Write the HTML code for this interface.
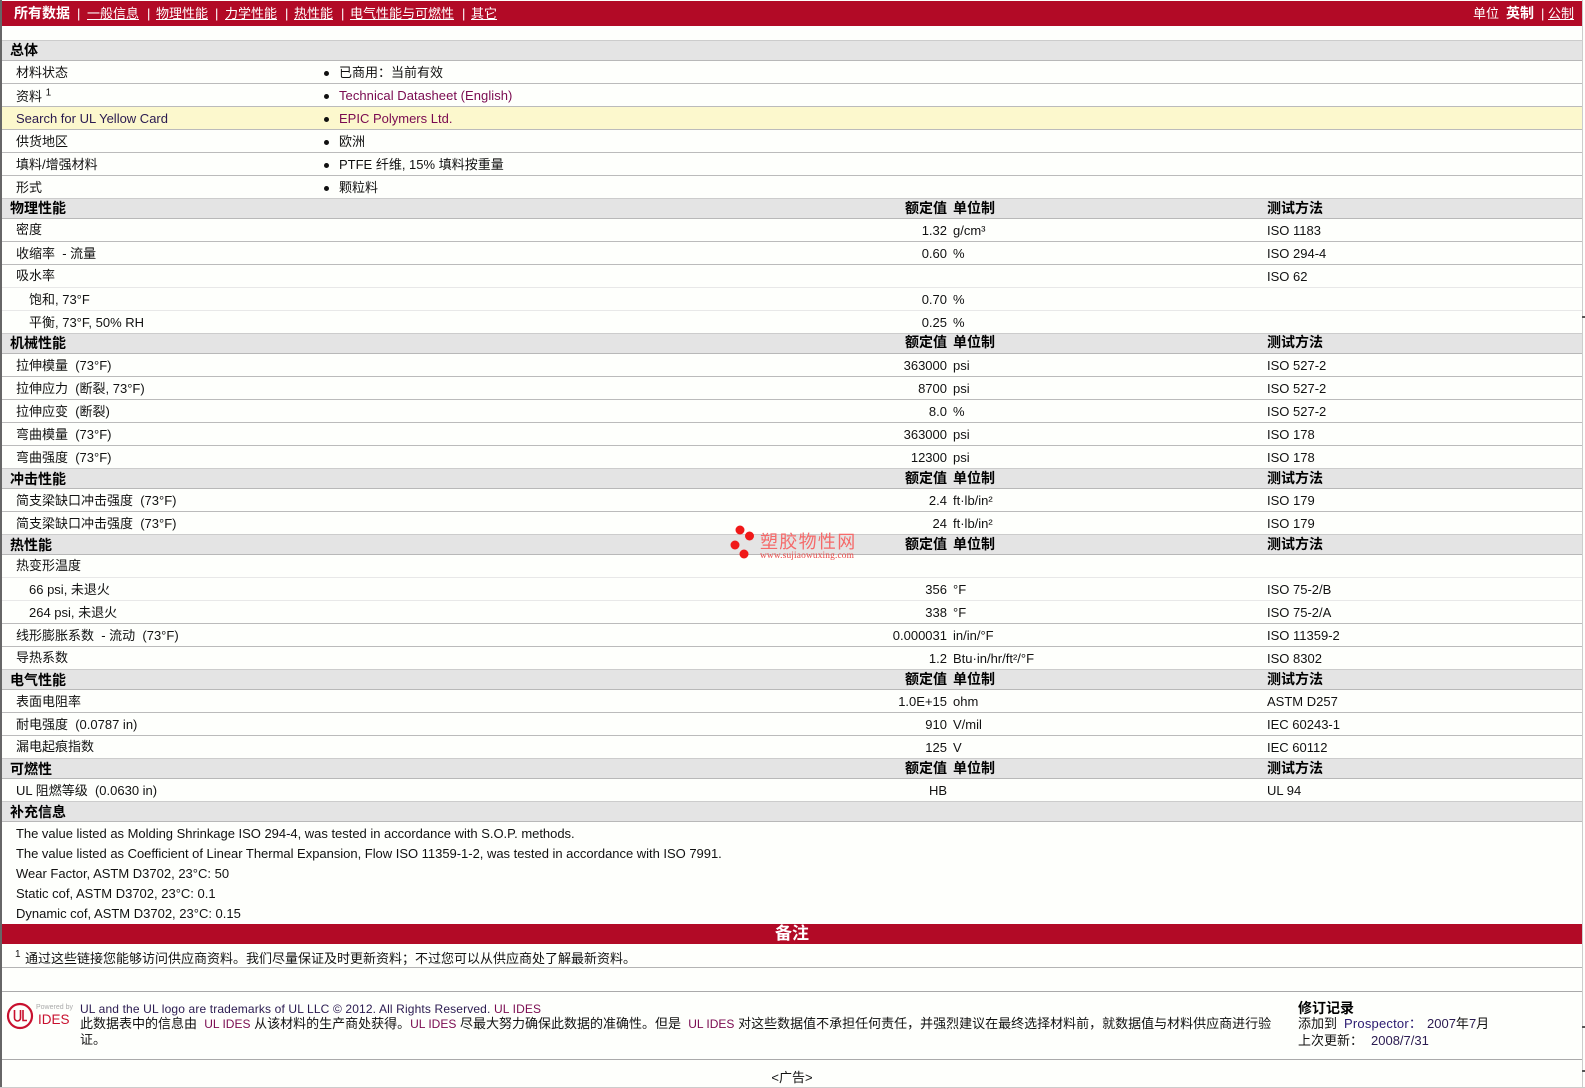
<!DOCTYPE html>
<html lang="zh">
<head>
<meta charset="utf-8">
<title>数据表</title>
<style>
html,body{margin:0;padding:0;background:#fefffc;}
body{position:relative;width:1585px;height:1088px;overflow:hidden;font-family:"Liberation Sans","WenQuanYi Zen Hei","Noto Sans CJK SC",sans-serif;font-size:13px;color:#111;}
a{color:inherit;text-decoration:none}
.abs,.r,.h,.l,.v,.u,.m,.b,.t,.x{position:absolute;white-space:nowrap}
.r{left:2px;width:1580px;height:22px;line-height:22px;border-bottom:1px solid #bbb;}
.r.n{border-bottom-color:#e8e8e8}
.r .l,.r .v,.r .u,.r .m,.r .t{top:1px}
.r .l.k{top:0}
.r .l.k2{top:2px}
.h{left:2px;width:1580px;height:19px;line-height:19px;background:#e4e4e4;border-bottom:1px solid #b8b8b8;border-top:1px solid #ccc;font-weight:bold;font-size:14px;color:#000;margin-top:-1px}
.l{left:14px}
.l.i{left:27px}
.h .l{left:8px;top:0}
.h .l.dn{top:1px}
.h .v,.h .u,.h .m{top:0}
.h .up{top:-1px !important}
.v{right:635px;text-align:right}
.u{left:951px}
.m{left:1265px}
.b{left:322px;width:5px;height:5px;border-radius:50%;background:#111;top:10px}
.t{left:337px}
.p{color:#7a0a50}
.f{font-size:12px}
.nav{color:#fff;line-height:25px;top:1px}
.nav a{text-decoration:underline}
.s{position:absolute;left:14px;height:20px;line-height:20px;white-space:nowrap}
.ln{position:absolute;left:2px;width:1580px;height:1px;background:#b4b4b4}
</style>
</head>
<body>
<div class="abs" style="left:0;top:0;width:2px;height:1088px;background:#666"></div>
<div class="abs" style="left:1582px;top:0;width:1px;height:1088px;background:#ccc"></div>
<div class="abs" style="left:1582px;top:316px;width:3px;height:2px;background:#555"></div>
<div class="abs" style="left:1582px;top:1026px;width:3px;height:2px;background:#555"></div>
<div class="abs" style="left:1582px;top:1070px;width:3px;height:2px;background:#555"></div>
<div class="abs" style="left:0;top:1087px;width:1585px;height:1px;background:#ccc"></div>

<!-- nav -->
<div class="abs" style="left:2px;top:1px;width:1580px;height:25px;background:#b20a26"></div>
<div class="abs nav" style="left:14px;font-weight:bold;font-size:14px">所有数据</div>
<div class="abs nav" style="left:77px">|</div>
<div class="abs nav" style="left:87px"><a>一般信息</a></div>
<div class="abs nav" style="left:147px">|</div>
<div class="abs nav" style="left:156px"><a>物理性能</a></div>
<div class="abs nav" style="left:215px">|</div>
<div class="abs nav" style="left:225px"><a>力学性能</a></div>
<div class="abs nav" style="left:285px">|</div>
<div class="abs nav" style="left:294px"><a>热性能</a></div>
<div class="abs nav" style="left:341px">|</div>
<div class="abs nav" style="left:350px"><a>电气性能与可燃性</a></div>
<div class="abs nav" style="left:462px">|</div>
<div class="abs nav" style="left:471px"><a>其它</a></div>
<div class="abs nav" style="left:1473px">单位</div>
<div class="abs nav" style="left:1506px;font-weight:bold;font-size:14px">英制</div>
<div class="abs nav" style="left:1541px">|</div>
<div class="abs nav" style="left:1548px"><a>公制</a></div>

<!-- general -->
<div class="h" style="top:41px"><span class="l">总体</span></div>
<div class="r" style="top:61px"><span class="l">材料状态</span><i class="b"></i><span class="t">已商用：当前有效</span></div>
<div class="r" style="top:84px"><span class="l k2">资料 <sup style="font-size:10px;line-height:0">1</sup></span><i class="b"></i><span class="t p" style="letter-spacing:.05px">Technical Datasheet (English)</span></div>
<div class="r" style="top:107px;background:#fcf8cd"><span class="l p" style="color:#2a1a50">Search for UL Yellow Card</span><i class="b"></i><span class="t p">EPIC Polymers Ltd.</span></div>
<div class="r" style="top:130px"><span class="l">供货地区</span><i class="b"></i><span class="t">欧洲</span></div>
<div class="r" style="top:153px"><span class="l">填料/增强材料</span><i class="b"></i><span class="t">PTFE 纤维, 15% 填料按重量</span></div>
<div class="r" style="top:176px"><span class="l">形式</span><i class="b"></i><span class="t">颗粒料</span></div>

<!-- physical -->
<div class="h" style="top:199px"><span class="l">物理性能</span><span class="v">额定值</span><span class="u">单位制</span><span class="m">测试方法</span></div>
<div class="r" style="top:219px"><span class="l k">密度</span><span class="v">1.32</span><span class="u">g/cm³</span><span class="m">ISO 1183</span></div>
<div class="r" style="top:242px"><span class="l">收缩率&nbsp; - 流量</span><span class="v">0.60</span><span class="u">%</span><span class="m">ISO 294-4</span></div>
<div class="r n" style="top:265px"><span class="l k">吸水率</span><span class="m">ISO 62</span></div>
<div class="r n" style="top:288px"><span class="l i">饱和, 73°F</span><span class="v">0.70</span><span class="u">%</span></div>
<div class="r" style="top:311px"><span class="l i">平衡, 73°F, 50% RH</span><span class="v">0.25</span><span class="u">%</span></div>

<!-- mechanical -->
<div class="h" style="top:334px"><span class="l">机械性能</span><span class="v up">额定值</span><span class="u up">单位制</span><span class="m up">测试方法</span></div>
<div class="r" style="top:354px"><span class="l">拉伸模量&nbsp; (73°F)</span><span class="v">363000</span><span class="u">psi</span><span class="m">ISO 527-2</span></div>
<div class="r" style="top:377px"><span class="l">拉伸应力&nbsp; (断裂, 73°F)</span><span class="v">8700</span><span class="u">psi</span><span class="m">ISO 527-2</span></div>
<div class="r" style="top:400px"><span class="l">拉伸应变&nbsp; (断裂)</span><span class="v">8.0</span><span class="u">%</span><span class="m">ISO 527-2</span></div>
<div class="r" style="top:423px"><span class="l">弯曲模量&nbsp; (73°F)</span><span class="v">363000</span><span class="u">psi</span><span class="m">ISO 178</span></div>
<div class="r" style="top:446px"><span class="l">弯曲强度&nbsp; (73°F)</span><span class="v">12300</span><span class="u">psi</span><span class="m">ISO 178</span></div>

<!-- impact -->
<div class="h" style="top:469px"><span class="l dn">冲击性能</span><span class="v">额定值</span><span class="u">单位制</span><span class="m">测试方法</span></div>
<div class="r" style="top:489px"><span class="l">简支梁缺口冲击强度&nbsp; (73°F)</span><span class="v">2.4</span><span class="u">ft·lb/in²</span><span class="m">ISO 179</span></div>
<div class="r" style="top:512px"><span class="l">简支梁缺口冲击强度&nbsp; (73°F)</span><span class="v">24</span><span class="u">ft·lb/in²</span><span class="m">ISO 179</span></div>

<!-- thermal -->
<div class="h" style="top:535px"><span class="l dn">热性能</span><span class="v">额定值</span><span class="u">单位制</span><span class="m">测试方法</span></div>
<div class="r n" style="top:555px"><span class="l k">热变形温度</span></div>
<div class="r n" style="top:578px"><span class="l i">66 psi, 未退火</span><span class="v">356</span><span class="u">°F</span><span class="m">ISO 75-2/B</span></div>
<div class="r" style="top:601px"><span class="l i">264 psi, 未退火</span><span class="v">338</span><span class="u">°F</span><span class="m">ISO 75-2/A</span></div>
<div class="r" style="top:624px"><span class="l">线形膨胀系数&nbsp; - 流动&nbsp; (73°F)</span><span class="v">0.000031</span><span class="u">in/in/°F</span><span class="m">ISO 11359-2</span></div>
<div class="r" style="top:647px"><span class="l k">导热系数</span><span class="v">1.2</span><span class="u">Btu·in/hr/ft²/°F</span><span class="m">ISO 8302</span></div>

<!-- electrical -->
<div class="h" style="top:670px"><span class="l dn">电气性能</span><span class="v">额定值</span><span class="u">单位制</span><span class="m">测试方法</span></div>
<div class="r" style="top:690px"><span class="l">表面电阻率</span><span class="v">1.0E+15</span><span class="u">ohm</span><span class="m">ASTM D257</span></div>
<div class="r" style="top:713px"><span class="l">耐电强度&nbsp; (0.0787 in)</span><span class="v">910</span><span class="u">V/mil</span><span class="m">IEC 60243-1</span></div>
<div class="r" style="top:736px"><span class="l k">漏电起痕指数</span><span class="v">125</span><span class="u">V</span><span class="m">IEC 60112</span></div>

<!-- flammability -->
<div class="h" style="top:759px"><span class="l dn">可燃性</span><span class="v">额定值</span><span class="u">单位制</span><span class="m">测试方法</span></div>
<div class="r" style="top:779px"><span class="l">UL 阻燃等级&nbsp; (0.0630 in)</span><span class="v">HB</span><span class="m">UL 94</span></div>

<!-- supplemental -->
<div class="h" style="top:802px"><span class="l dn">补充信息</span></div>
<div class="s" style="left:16px;top:824px;letter-spacing:-.02px">The value listed as Molding Shrinkage ISO 294-4, was tested in accordance with S.O.P. methods.</div>
<div class="s" style="left:16px;top:844px;letter-spacing:-.02px">The value listed as Coefficient of Linear Thermal Expansion, Flow ISO 11359-1-2, was tested in accordance with ISO 7991.</div>
<div class="s" style="left:16px;top:864px">Wear Factor, ASTM D3702, 23°C: 50</div>
<div class="s" style="left:16px;top:884px">Static cof, ASTM D3702, 23°C: 0.1</div>
<div class="s" style="left:16px;top:904px">Dynamic cof, ASTM D3702, 23°C: 0.15</div>

<!-- notes -->
<div class="abs" style="left:2px;top:924px;width:1580px;height:20px;line-height:20px;background:#b20a26;color:#fff;font-weight:bold;font-size:17px;text-align:center">备注</div>
<div class="abs" style="left:15px;top:949px;font-size:10px;line-height:12px">1</div>
<div class="abs" style="left:25px;top:949px;line-height:20px">通过这些链接您能够访问供应商资料。我们尽量保证及时更新资料；不过您可以从供应商处了解最新资料。</div>
<div class="ln" style="top:967px"></div>
<div class="ln" style="top:991px;background:#aaa"></div>

<!-- footer -->
<svg class="abs" style="left:5px;top:1002px" width="72" height="30" viewBox="0 0 72 30">
<circle cx="15" cy="14" r="12" fill="none" stroke="#c8102e" stroke-width="2.2"/>
<path d="M9.500 8v8a3 3 0 0 0 6 0V8" fill="none" stroke="#c8102e" stroke-width="1.600"/>
<path d="M18 8v10.500h4" fill="none" stroke="#c8102e" stroke-width="1.600"/>
<text x="31" y="7" font-size="7" fill="#aaa" font-family="Liberation Sans">Powered by</text>
<text x="33" y="22" font-size="13.500" fill="#c8102e" font-family="Liberation Sans">IDES</text>
</svg>
<div class="abs f" style="left:80px;top:1001px;line-height:16px;letter-spacing:.14px"><span style="color:#2a1a50">UL and the UL logo are trademarks of UL LLC © 2012. All Rights Reserved.</span> <span class="p">UL IDES</span></div>
<div class="abs" style="left:80px;top:1016px;line-height:15px">此数据表中的信息由&nbsp; <span class="p f">UL IDES</span> 从该材料的生产商处获得。<span class="p f">UL IDES</span> 尽最大努力确保此数据的准确性。但是&nbsp; <span class="p f">UL IDES</span> 对这些数据值不承担任何责任，并强烈建议在最终选择材料前，就数据值与材料供应商进行验<br>证。</div>
<div class="abs" style="left:1298px;top:1000px;line-height:16px;font-weight:bold;font-size:14px;color:#000">修订记录</div>
<div class="abs" style="left:1298px;top:1016px;line-height:16px">添加到</div>
<div class="abs" style="left:1344px;top:1016px;line-height:16px;color:#2a1a70;letter-spacing:.2px">Prospector：</div>
<div class="abs" style="left:1427px;top:1016px;line-height:16px;color:#2a1a50">2007<span style="color:#111">年</span>7<span style="color:#111">月</span></div>
<div class="abs" style="left:1298px;top:1033px;line-height:16px">上次更新：</div>
<div class="abs" style="left:1371px;top:1033px;line-height:16px;color:#2a1a50">2008/7/31</div>
<div class="ln" style="top:1059px;background:#aaa"></div>
<div class="abs" style="left:2px;top:1069px;width:1580px;text-align:center;line-height:17px">&lt;广告&gt;</div>

<!-- watermark -->
<svg class="abs" style="left:725px;top:520px" width="140" height="45" viewBox="0 0 140 45">
<circle cx="15" cy="10" r="4.500" fill="#f01818"/>
<circle cx="24.500" cy="16" r="4.500" fill="#f01818"/>
<circle cx="10" cy="25" r="4.500" fill="#f01818"/>
<circle cx="19" cy="34" r="4.500" fill="#f01818"/>
<text x="35" y="28" font-size="18" fill="#f56a6a" font-family="WenQuanYi Zen Hei, Noto Sans CJK SC, sans-serif" letter-spacing="1.300">塑胶物性网</text>
<text x="35" y="38" font-size="9.400" fill="#e84848" font-family="Liberation Serif, serif" letter-spacing=".15">www.sujiaowuxing.com</text>
</svg>
</body>
</html>
